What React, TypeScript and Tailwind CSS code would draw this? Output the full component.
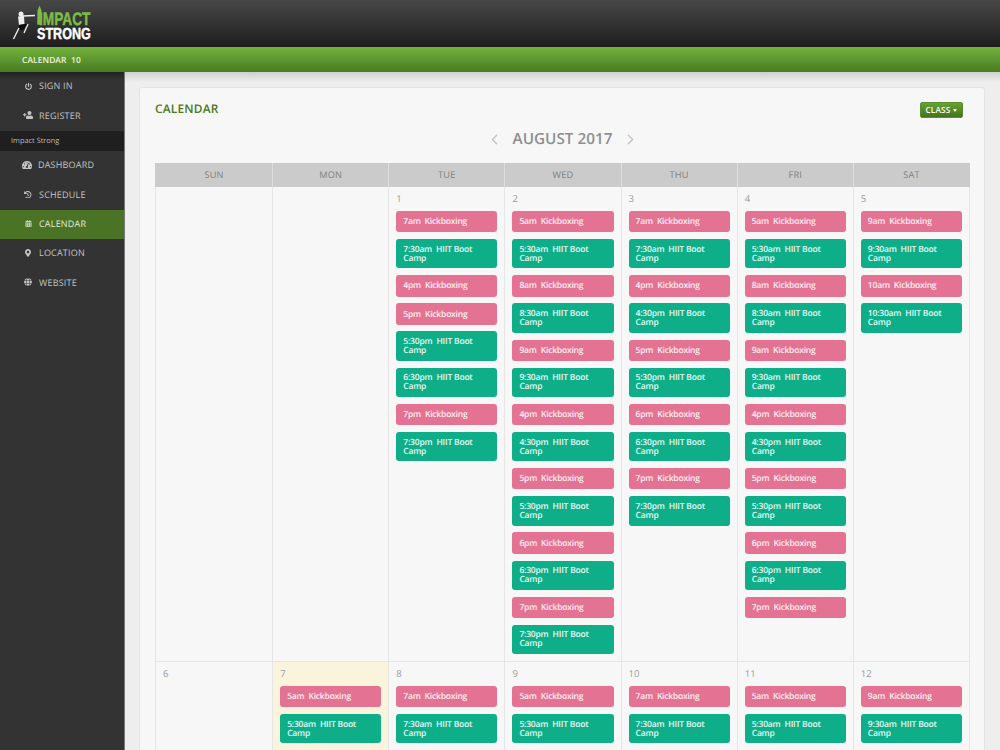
import { ChevronLeft, ChevronRight } from 'lucide-react'
import { FaPowerOff, FaUserPlus, FaTachometerAlt, FaHistory, FaCalendarAlt, FaMapMarkerAlt, FaGlobe } from 'react-icons/fa'

type Ev = string

const K = (t: string): Ev => `k|${t}  Kickboxing`
const H = (t: string): Ev => `h|${t}  HIIT Boot Camp`

const week1: { day?: number; events: Ev[] }[] = [
  { events: [] },
  { events: [] },
  { day: 1, events: [K('7am'), H('7:30am'), K('4pm'), K('5pm'), H('5:30pm'), H('6:30pm'), K('7pm'), H('7:30pm')] },
  { day: 2, events: [K('5am'), H('5:30am'), K('8am'), H('8:30am'), K('9am'), H('9:30am'), K('4pm'), H('4:30pm'), K('5pm'), H('5:30pm'), K('6pm'), H('6:30pm'), K('7pm'), H('7:30pm')] },
  { day: 3, events: [K('7am'), H('7:30am'), K('4pm'), H('4:30pm'), K('5pm'), H('5:30pm'), K('6pm'), H('6:30pm'), K('7pm'), H('7:30pm')] },
  { day: 4, events: [K('5am'), H('5:30am'), K('8am'), H('8:30am'), K('9am'), H('9:30am'), K('4pm'), H('4:30pm'), K('5pm'), H('5:30pm'), K('6pm'), H('6:30pm'), K('7pm')] },
  { day: 5, events: [K('9am'), H('9:30am'), K('10am'), H('10:30am')] },
]

const week2: { day?: number; events: Ev[]; today?: boolean }[] = [
  { day: 6, events: [] },
  { day: 7, today: true, events: [K('5am'), H('5:30am')] },
  { day: 8, events: [K('7am'), H('7:30am')] },
  { day: 9, events: [K('5am'), H('5:30am')] },
  { day: 10, events: [K('7am'), H('7:30am')] },
  { day: 11, events: [K('5am'), H('5:30am')] },
  { day: 12, events: [K('9am'), H('9:30am')] },
]

const days = ['SUN', 'MON', 'TUE', 'WED', 'THU', 'FRI', 'SAT']

function NavItem({ icon: Icon, label, active, iconSize = 9, tight, flip }: { icon: React.ElementType; label: string; active?: boolean; iconSize?: number; tight?: boolean; flip?: boolean }) {
  return (
    <div className={`flex h-[29.3px] items-center pb-[1px] text-[9px] tracking-[0.2px] ${active ? 'bg-[#4a7326] text-[#e6ecdf]' : 'text-[#c4c4c4]'}`}>
      <div className={`flex shrink-0 items-center justify-center ${tight ? 'w-[38px] pl-[19px] pr-[3px]' : 'w-[39px] pl-[20px] pr-[3px]'} ${active ? 'text-[#c5d5b5]' : ''}`}>
        <Icon size={iconSize} className={flip ? '-scale-x-100' : ''} />
      </div>
      <span>{label}</span>
    </div>
  )
}

function Event({ ev }: { ev: Ev }) {
  const [kind, text] = ev.split('|')
  return (
    <div
      className={`mb-[6.8px] flex items-center whitespace-pre-wrap rounded-[3px] px-[7px] text-[8.5px] font-semibold leading-[9px] tracking-[-0.2px] text-white/90 ${
        kind === 'k' ? 'h-[21.3px] bg-[#e37293]' : 'h-[29.4px] bg-[#0eae89]'
      }`}
    >
      <span>{text}</span>
    </div>
  )
}

function Cell({ day, events, today, height }: { day?: number; events: Ev[]; today?: boolean; height: string }) {
  return (
    <div className={`border-l border-[#e6e6e6] px-[7px] pt-[6px] first:border-l-0 ${height} ${today ? 'bg-[#f9f4db]' : ''}`}>
      <div className="mb-[7px] h-[11px] text-[9.5px] font-medium leading-[11px] text-[#9c9c9c]">{day}</div>
      {events.map((e, i) => (
        <Event key={i} ev={e} />
      ))}
    </div>
  )
}

export default function App() {
  return (
    <div className="h-[750px] w-[1000px] overflow-hidden bg-[#eee] font-['Open_Sans',sans-serif] [text-rendering:geometricPrecision]">
      {/* Header */}
      <div className="relative flex h-[47px] bg-gradient-to-b from-[#484848] to-[#1e1e1e] pl-[12px]">
        <svg width="32" height="42" viewBox="0 0 32 42" className="mt-[3px] shrink-0">
          {/* runner */}
          <circle cx="9" cy="11" r="2.5" fill="#eee" />
          <path d="M10 13 L23 12.5" stroke="#eee" strokeWidth="1.3" />
          <path d="M6 13.5 L12 12.8 L12.5 21 L7 22 Z" fill="#eee" />
          <path d="M7 22 L13 21 L16 21 L13 24 L11 27 L7 27 Z" fill="#0c0c0c" />
          <path d="M7 25 L1.5 36" stroke="#eee" strokeWidth="1.4" />
          <path d="M16 21 L12 30" stroke="#eee" strokeWidth="1.3" />
          {/* tower */}
          <path d="M25.5 7.5 L27.5 2.5 L29.5 7.5 L29.8 21.7 L25.2 21.7 Z" fill="#7cbb47" />
        </svg>
        <div className="absolute left-[38.5px] top-[12px] h-[14px] w-[53px] font-['Liberation_Sans',sans-serif] font-bold">
          <span className="block origin-top-left scale-x-[0.76] whitespace-nowrap text-[18px] leading-[15px] text-[#7cbb47] [-webkit-text-stroke:0.5px_#7cbb47]">IMPACT</span>
        </div>
        <div className="absolute left-[36.5px] top-[28px] h-[13px] w-[54px] font-['Liberation_Sans',sans-serif] font-bold">
          <span className="block origin-top-left scale-x-[0.786] whitespace-nowrap text-[16px] leading-[13px] text-white [-webkit-text-stroke:0.4px_#fff]">STRONG</span>
        </div>
      </div>

      {/* Green bar */}
      <div className="flex h-[25px] items-center bg-gradient-to-b from-[#74b43c] to-[#487b22] pl-[22px] pt-[4px] text-[8.4px] font-semibold tracking-[0.1px] text-[#eef3e8]">
        CALENDAR&nbsp;&nbsp;10
      </div>

      <div className="flex h-[678px]">
        {/* Sidebar */}
        <div className="w-[125px] shrink-0 border-r border-[#777] bg-gradient-to-b from-[#222] to-[#333] to-[1.2%]">
          <NavItem icon={FaPowerOff} label="SIGN IN" iconSize={7} />
          <NavItem icon={FaUserPlus} label="REGISTER" iconSize={10} flip />
          <div className="flex h-[20.5px] items-center bg-[#1f1f1f] pl-[11px] pt-[2px] text-[7.4px] text-[#bbb]">Impact Strong</div>
          <NavItem icon={FaTachometerAlt} label="DASHBOARD" iconSize={10} tight />
          <NavItem icon={FaHistory} label="SCHEDULE" iconSize={7.5} />
          <NavItem icon={FaCalendarAlt} label="CALENDAR" active iconSize={7} />
          <NavItem icon={FaMapMarkerAlt} label="LOCATION" iconSize={8} />
          <NavItem icon={FaGlobe} label="WEBSITE" iconSize={8} />
        </div>

        {/* Main */}
        <div className="flex-1 overflow-hidden bg-gradient-to-b from-[#cfcfcf] from-0% to-[#eee] to-[1.5%] pl-[14px] pr-[15px] pt-[15px]">
          <div className="h-[700px] rounded-[3px] border border-[#e4e4e4] bg-[#f7f7f7] pl-[15px] pr-[14px] pt-[14px]">
            <div className="flex items-start justify-between">
              <h1 className="text-[11.9px] font-semibold leading-[15px] tracking-[0.2px] text-[#4a7a22]">CALENDAR</h1>
              <button className="mr-[7.5px] flex h-[16px] items-center gap-[2.5px] rounded-[2px] border border-[#5a8f30] bg-gradient-to-b from-[#66a332] to-[#43731d] px-[4.5px] text-[8.2px] font-semibold tracking-[0.2px] text-white">
                CLASS
                <span className="h-0 w-0 border-x-[2.5px] border-t-[3px] border-x-transparent border-t-white" />
              </button>
            </div>

            <div className="mt-[6px] flex h-[30px] items-center justify-center text-[#c4c4c4]">
              <ChevronLeft size={17} strokeWidth={2} />
              <span className="mx-[9.5px] text-[15.3px] font-semibold leading-[20px] text-[#8f8f8f]">AUGUST 2017</span>
              <ChevronRight size={17} strokeWidth={2} />
            </div>

            {/* Weekday header */}
            <div className="mt-[9px] grid grid-cols-7 bg-[#cbcbcb] px-[1px]">
              {days.map((d) => (
                <div key={d} className="flex h-[24px] items-center justify-center border-l border-[#dedede] text-[9.2px] tracking-[0.2px] text-[#808080] first:border-l-0">
                  {d}
                </div>
              ))}
            </div>

            {/* Weeks */}
            <div className="grid grid-cols-7 border-x border-b border-[#e6e6e6]">
              {week1.map((c, i) => (
                <Cell key={i} {...c} height="h-[474px]" />
              ))}
            </div>
            <div className="grid grid-cols-7 border-x border-[#e6e6e6]">
              {week2.map((c, i) => (
                <Cell key={i} {...c} height="h-[200px]" />
              ))}
            </div>
          </div>
        </div>
      </div>
    </div>
  )
}
